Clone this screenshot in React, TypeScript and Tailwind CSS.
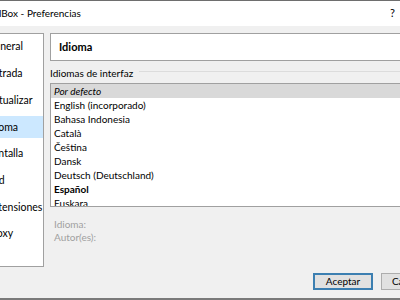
const sections = ["General", "Entrada", "Actualizar", "Idioma", "Pantalla", "Red", "Extensiones", "Proxy"];

const languages = [
  { name: "Por defecto", style: "italic bg-[#d9d9d9]" },
  { name: "English (incorporado)", style: "" },
  { name: "Bahasa Indonesia", style: "" },
  { name: "Català", style: "" },
  { name: "Čeština", style: "" },
  { name: "Dansk", style: "" },
  { name: "Deutsch (Deutschland)", style: "" },
  { name: "Español", style: "font-bold" },
  { name: "Euskara", style: "" },
];

export default function App() {
  return (
    <div className="w-[400px] h-[300px] overflow-hidden bg-[#f0f0f0] flex flex-col font-['Lato',sans-serif] text-[10px] text-black border-t border-[#6e6e6e]">
      {/* Title bar */}
      <div className="h-[25px] bg-white flex items-center justify-between shrink-0">
        <span className="ml-[-28px] whitespace-nowrap text-[10px]">VirtualBox - Preferencias</span>
        <span className="mr-[5px] text-[11px]">?</span>
      </div>

      <div className="flex pt-[7px] shrink-0">
        {/* Sections list */}
        <div className="w-[44px] h-[234px] bg-white border border-l-0 border-[#a0a0a0] overflow-hidden shrink-0">
          {sections.map((s) => (
            <div key={s} className="h-[26.7px] flex items-center">
              <div
                className={`h-[22px] w-full flex items-center whitespace-nowrap text-[10.5px] ${s === "Idioma" ? "bg-[#cce8ff]" : ""}`}
              >
                <span className="ml-[-13px]">{s}</span>
              </div>
            </div>
          ))}
        </div>

        {/* Page */}
        <div className="ml-[6px] flex-1 flex flex-col min-w-0">
          <div className="h-[28px] bg-white border border-r-0 border-[#a0a0a0] flex items-center pl-[8px] font-bold text-[11px]">
            Idioma
          </div>

          <div className="mt-[5px] h-[14px] flex items-center">
            <span className="whitespace-nowrap">Idiomas de interfaz</span>
            <div className="ml-[6px] flex-1 h-px bg-[#dcdcdc] mt-[-3px]" />
          </div>

          <div className="mt-[3px] h-[124px] bg-white border border-r-0 border-[#a0a0a0] overflow-hidden">
            {languages.map((l) => (
              <div key={l.name} className={`h-[14px] leading-[14px] pl-[3px] whitespace-nowrap ${l.style}`}>
                {l.name}
              </div>
            ))}
          </div>

          <div className="mt-[11px] pl-[4px] text-[#a0a0a0] leading-[13px]">
            <div>Idioma:</div>
            <div>Autor(es):</div>
          </div>
        </div>
      </div>

      {/* Buttons */}
      <div className="mt-[6px] h-[17px] flex gap-[8px] pl-[313px] shrink-0">
        <button className="w-[60px] h-[17px] shrink-0 bg-[#e1e1e1] border-2 border-[#3c7fb1] flex items-center justify-center text-[10px]">
          Aceptar
        </button>
        <button className="w-[60px] h-[17px] shrink-0 bg-[#e1e1e1] border border-[#adadad] flex items-center justify-center text-[10px]">
          Cancelar
        </button>
      </div>

      <div className="flex-1" />
      <div className="h-[2px] bg-[#7a7a7a] shrink-0" />
    </div>
  );
}
